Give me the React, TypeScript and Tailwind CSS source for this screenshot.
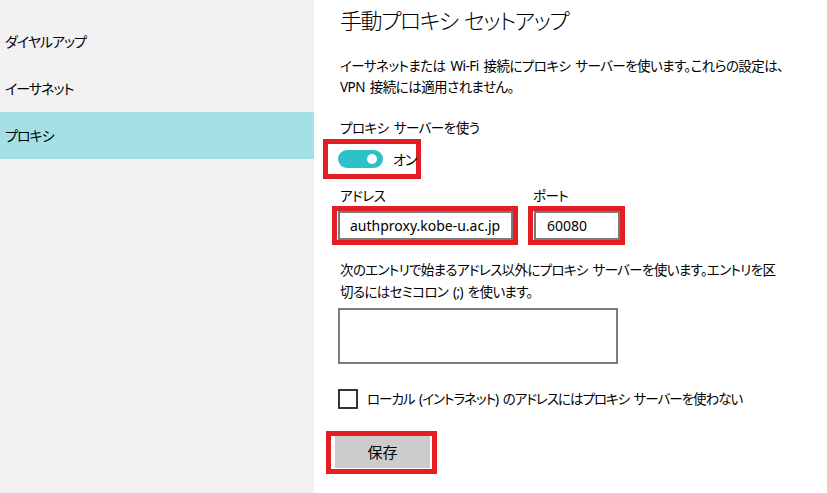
const navItems = [
  { label: "ダイヤルアップ", active: false },
  { label: "イーサネット", active: false },
  { label: "プロキシ", active: true },
];

const Sidebar = () => {
  return (
    <div className="w-[314px] shrink-0 bg-[#f2f2f2] pt-[18px]">
      {navItems.map((item) => (
        <div
          key={item.label}
          className={`flex h-[47px] items-center pl-[5px] text-[14px] tracking-[-1px] ${item.active ? "bg-[#a4e0e4]" : ""}`}
        >
          {item.label}
        </div>
      ))}
    </div>
  );
};

export default function App() {
  return (
    <div className="flex h-[493px] w-[827px] overflow-hidden bg-white text-black font-['Noto_Sans','Noto_Sans_CJK_JP',sans-serif] [font-feature-settings:'palt'] [word-spacing:2px]">
      <Sidebar />
      <div className="flex flex-col pl-[26px]">
        <h1 className="mt-[6px] whitespace-nowrap text-[22px] font-light leading-[28px] tracking-[-1.5px]">
          手動プロキシ セットアップ
        </h1>

        <p className="mt-[22px] whitespace-nowrap text-[13.5px] leading-[21px] tracking-[-0.55px]">
          イーサネットまたは Wi-Fi 接続にプロキシ サーバーを使います。これらの設定は、
          <br />
          VPN 接続には適用されません。
        </p>

        <p className="mt-[20px] text-[13.5px] leading-[21px] tracking-[-0.5px]">プロキシ サーバーを使う</p>

        {/* toggle */}
        <div className="ml-[-17px] flex h-[40px] w-[98px] items-center border-[5px] border-[#e31e24] pl-[10px]">
          <div className="flex h-[18px] w-[45px] shrink-0 items-center justify-end rounded-full bg-[#2cc0c7] pr-[6px]">
            <div className="h-[10px] w-[10px] rounded-full bg-white" />
          </div>
          <span className="ml-[10px] whitespace-nowrap text-[14px] tracking-[-1px]">オン</span>
        </div>

        <div className="ml-[-8px] mt-[8px] flex gap-[10px]">
          <div className="flex flex-col">
            <label className="pl-[8px] text-[13.5px] leading-[19px] tracking-[-0.5px]">アドレス</label>
            <div className="h-[39px] w-[186px] border-[5px] border-[#e31e24] pl-px">
              <div className="flex h-full items-center whitespace-nowrap border-2 border-[#7a7a7a] pl-[10px] text-[14px] [word-spacing:0px]">
                authproxy.kobe-u.ac.jp
              </div>
            </div>
          </div>
          <div className="flex flex-col">
            <label className="pl-[5px] text-[13.5px] leading-[19px] tracking-[-0.5px]">ポート</label>
            <div className="h-[39px] w-[97px] border-[5px] border-[#e31e24] pl-px">
              <div className="flex h-full items-center border-2 border-[#7a7a7a] pl-[11px] text-[14px]">60080</div>
            </div>
          </div>
        </div>

        <p className="mt-[14px] whitespace-nowrap text-[13.5px] leading-[22px] tracking-[-0.65px]">
          次のエントリで始まるアドレス以外にプロキシ サーバーを使います。エントリを区
          <br />
          切るにはセミコロン (;) を使います。
        </p>

        <div className="ml-[-2px] mt-[5px] h-[56px] w-[280px] border-2 border-[#7a7a7a]" />

        <div className="ml-[-2px] mt-[25px] flex items-center">
          <div className="h-[20px] w-[20px] border-2 border-[#333333]" />
          <span className="ml-[9px] whitespace-nowrap text-[13.5px] leading-[20px] tracking-[-1px]">
            ローカル (イントラネット) のアドレスにはプロキシ サーバーを使わない
          </span>
        </div>

        <div className="ml-[-14px] mt-[22px] h-[43px] w-[111px] border-[5px] border-[#e31e24] pl-[4px] pr-[2px] pb-px">
          <button className="flex h-full w-full items-center justify-center bg-[#cccccc] text-[15px]">保存</button>
        </div>
      </div>
    </div>
  );
}
